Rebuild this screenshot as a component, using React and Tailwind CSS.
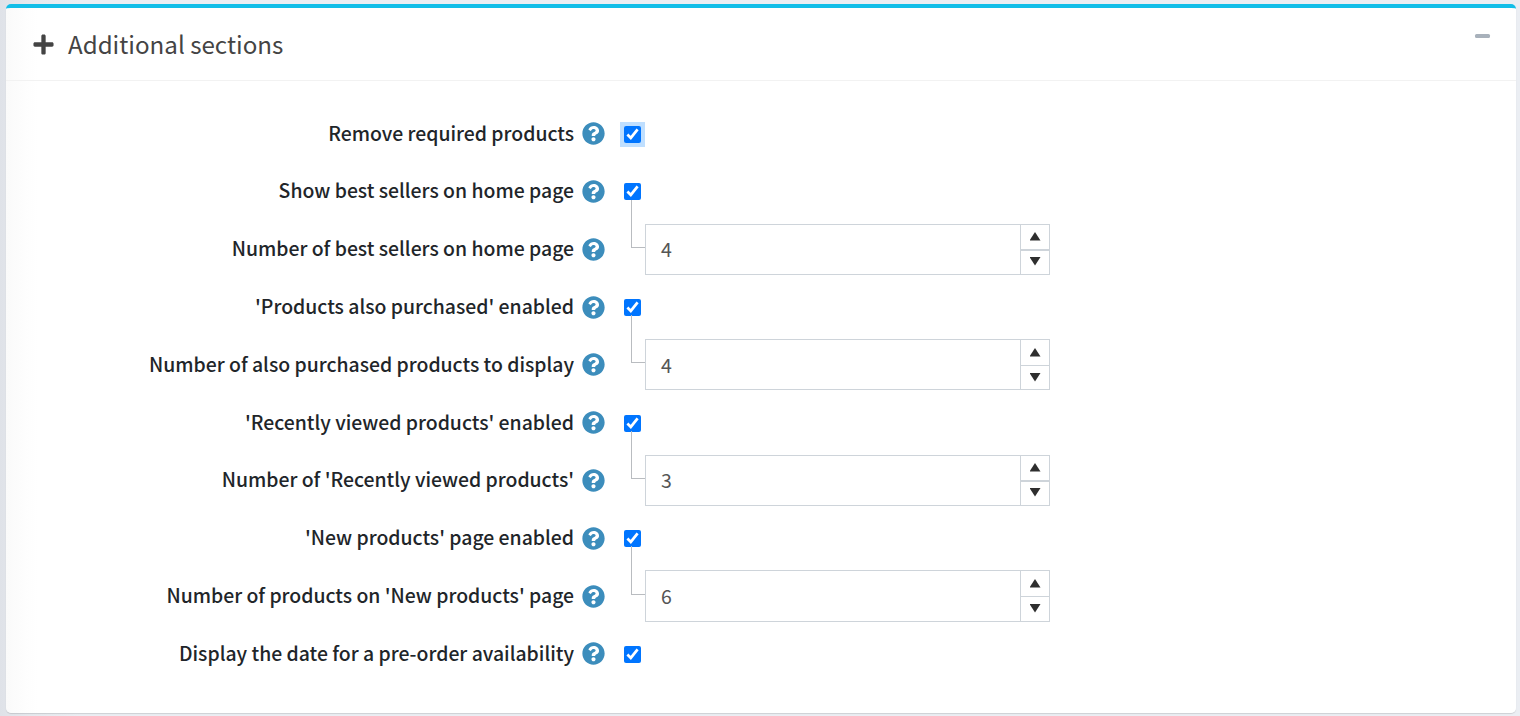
import { FaPlus, FaQuestionCircle } from "react-icons/fa";

const rows = [
  { label: "Remove required products", focused: true },
  { label: "Show best sellers on home page" },
  { label: "Number of best sellers on home page", value: 4, thick: true },
  { label: "'Products also purchased' enabled" },
  { label: "Number of also purchased products to display", value: 4 },
  { label: "'Recently viewed products' enabled" },
  { label: "Number of 'Recently viewed products'", value: 3, thick: true },
  { label: "'New products' page enabled" },
  { label: "Number of products on 'New products' page", value: 6 },
  { label: "Display the date for a pre-order availability" },
];

function Spinner({ value, thick }) {
  return (
    <div className="relative -mb-[0.6px] ml-[40px] flex h-[51.2px] w-[405px] border border-[#ced4da]">
      <span className="absolute -top-[25px] -left-[15px] box-content h-[47.2px] w-[13px] border-b border-l border-[#b9bcc0]" />
      <span className="flex flex-1 items-center pb-[1px] pl-[15px] text-[19.5px] leading-none text-[#555]">{value}</span>
      <div className="flex w-[29px] flex-col border-l border-[#ced4da] text-[#2e2e2e]">
        <div className={`flex h-[26px] items-center justify-center border-[#ced4da] ${thick ? "border-b-2" : "border-b"}`}>
          <svg width="11" height="9" viewBox="0 0 11 9"><path d="M5 0L10.5 8.5H-0.5Z" fill="currentColor" /></svg>
        </div>
        <div className="flex flex-1 items-center justify-center pb-[1.4px]">
          <svg width="11" height="9" viewBox="0 0 11 9"><path d="M-0.5 0H10.5L5 8.5Z" fill="currentColor" /></svg>
        </div>
      </div>
    </div>
  );
}

export default function App() {
  return (
    <div className="h-[716px] w-[1520px] bg-[linear-gradient(to_right,#dfe2e8,#e6e9ee_30px,#ebeef3_80px)] pt-1 pr-1 pl-1.5 font-['Noto_Sans_CJK_SC','Noto_Sans',sans-serif]">
      <section className="h-[709px] overflow-hidden rounded-[5px] border-t-4 border-[#12bee8] bg-[linear-gradient(to_right,#fafafa,#fefefe_24px,#fff_32px)] shadow-[0_1px_1px_rgba(0,0,0,0.13)]">
        <header className="flex h-[73px] items-center border-b border-[#f2f2f2] pr-[26px] pl-[26px] text-[#444]">
          <FaPlus className="mt-px size-[23px]" />
          <h1 className="ml-[13px] text-[24.15px] leading-none">Additional sections</h1>
          <span className="mb-[17px] ml-auto h-1 w-[15px] rounded-[1.5px] bg-[#a8b1bb]" />
        </header>
        <div className="pt-[23.4px]">
          {rows.map((r) => (
            <div key={r.label} className="flex h-[57.8px] items-center">
              <div className="flex w-[599px] items-center justify-end">
                <span className="mb-[1.8px] text-[19.4px] leading-none font-medium whitespace-nowrap text-[#212529]">{r.label}</span>
                <FaQuestionCircle className="mt-[0.8px] ml-[8px] size-[23px] text-[#3c8dbc]" />
              </div>
              {r.value === undefined ? (
                <div className={`mt-[1.6px] ml-[15px] flex size-[25px] items-center justify-center ${r.focused ? "bg-[#bfdfff]" : ""}`}>
                  <input type="checkbox" defaultChecked className="size-[17px]" />
                </div>
              ) : (
                <Spinner value={r.value} thick={r.thick} />
              )}
            </div>
          ))}
        </div>
      </section>
    </div>
  );
}
